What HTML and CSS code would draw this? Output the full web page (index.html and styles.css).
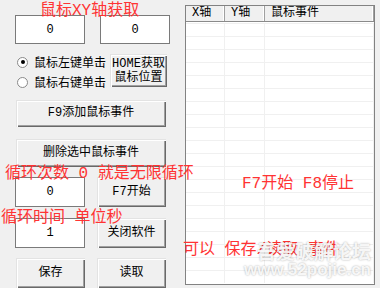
FILE: index.html
```html
<!DOCTYPE html>
<html lang="zh">

<head>
  <meta charset="UTF-8" />
  <title>鼠标连点器</title>
  <link rel="stylesheet" href="styles.css">
</head>

<body>
  <div class="window">
    <!-- Panneau de gauche : coordonnées et commandes -->
    <section class="left">
      <div class="pos-row">
        <div class="field">0</div>
        <div class="field">0</div>
      </div>

      <div class="mode-row">
        <div class="radios">
          <label class="radio"><span class="dot on"></span>鼠标左键单击</label>
          <label class="radio"><span class="dot"></span>鼠标右键单击</label>
        </div>
        <button class="btn home">HOME获取<br>鼠标位置</button>
      </div>

      <button class="btn wide add">F9添加鼠标事件</button>
      <button class="btn wide del">删除选中鼠标事件</button>

      <div class="pair first">
        <div class="field">0</div>
        <button class="btn">F7开始</button>
      </div>
      <div class="pair">
        <div class="field">1</div>
        <button class="btn">关闭软件</button>
      </div>
      <div class="pair last">
        <button class="btn">保存</button>
        <button class="btn">读取</button>
      </div>
    </section>

    <!-- Liste des événements -->
    <section class="list">
      <div class="list-head">
        <div class="col">X轴</div>
        <div class="col">Y轴</div>
        <div class="col">鼠标事件</div>
      </div>
      <div class="list-body" id="listBody"></div>
    </section>

    <!-- Annotations rouges -->
    <span class="note n1">鼠标XY轴获取</span>
    <span class="note n2">循环次数 0 就是无限循环</span>
    <span class="note n3">循环时间 单位秒</span>
    <span class="note n4">F7开始 F8停止</span>
    <span class="note n5">可以 保存/读取 事件</span>

    <div class="watermark">
      <div class="wm-title">吾爱破解论坛</div>
      <div class="wm-url">www.52pojie.cn</div>
    </div>
  </div>

  <script>
    // lignes vides de la liste
    const listBody = document.getElementById('listBody');
    for (let i = 0; i < 20; i++) {
      listBody.insertAdjacentHTML('beforeend',
        '<div class="list-row"><div class="cell"></div><div class="cell"></div><div class="cell"></div></div>');
    }
  </script>
</body>

</html>
```

FILE: styles.css
```css
/* --- Base --- */
body {
  margin: 0;
  background: #f0f0f0;
  font: 12px "Liberation Mono", "Noto Sans CJK SC", monospace;
  color: #000;
}

.window {
  position: relative;
  width: 380px;
  height: 288px;
  display: flex;
  overflow: hidden;
}

/* --- Panneau gauche --- */
.left {
  width: 185px;
  flex: none;
  box-sizing: border-box;
  padding: 15px 0 0 15px;
  display: flex;
  flex-direction: column;
  align-items: flex-start;
}

.field {
  width: 70px;
  height: 29px;
  box-sizing: border-box;
  background: #fff;
  border: 1px solid #7a7a7a;
  display: flex;
  align-items: center;
  justify-content: center;
  line-height: 1;
}

.pos-row {
  display: flex;
  gap: 15px;
}

.mode-row {
  display: flex;
  margin-top: 10px;
}

.radios {
  width: 95px;
  margin-top: -2px;
  display: flex;
  flex-direction: column;
}

.radio {
  height: 20px;
  display: flex;
  align-items: center;
  gap: 6px;
  padding-left: 2px;
}

.dot {
  width: 11px;
  height: 11px;
  box-sizing: border-box;
  border: 1px solid #8a8a8a;
  border-radius: 50%;
  background: #fff;
  display: flex;
  align-items: center;
  justify-content: center;
}

.dot.on::after {
  content: "";
  width: 4px;
  height: 4px;
  border-radius: 50%;
  background: #000;
}

/* --- Boutons --- */
.btn {
  background: #f0f0f0;
  border: none;
  padding: 0;
  font: inherit;
  color: #000;
  box-shadow: inset 1px 1px #e3e3e3, inset 2px 2px #fff,
    inset -1px -1px #696969, inset -2px -2px #a0a0a0;
  line-height: 1.2;
}

.home {
  width: 57px;
  height: 33px;
  line-height: 14px;
}

.wide {
  width: 150px;
  margin-left: 1px;
}

.add {
  height: 28px;
  margin-top: 8px;
}

.del {
  height: 29px;
  margin-top: 12px;
}

.pair {
  display: flex;
  gap: 12px;
  margin-top: 11px;
}

.pair.first {
  margin-top: 10px;
}

.pair.last {
  margin-top: 10px;
  margin-left: 1px;
  gap: 12px;
}

.pair .field {
  height: 30px;
}

.pair .btn {
  width: 69px;
  height: 30px;
}

/* --- Liste --- */
.list {
  width: 190px;
  height: 280px;
  margin-top: 5px;
  box-sizing: border-box;
  border: 1px solid #828282;
  background: #fff;
  overflow: hidden;
}

.list-head {
  display: grid;
  grid-template-columns: 39px 40px 1fr;
  height: 16px;
  box-sizing: border-box;
  border-bottom: 1px solid #8a8a8a;
  background: #f0f0f0;
}

.list-head .col {
  padding-left: 6px;
  line-height: 15px;
  border-right: 1px solid #a0a0a0;
  box-shadow: inset -1px 0 #fff;
}

.list-body {
  margin-top: 1px;
}

.list-row {
  display: grid;
  grid-template-columns: 39px 40px 1fr;
  height: 13px;
  box-sizing: border-box;
  border-top: 1px solid #f0f0f0;
}

.cell {
  border-right: 1px solid #f0f0f0;
}

/* --- Annotations --- */
.note {
  position: absolute;
  color: #f33;
  font-size: 16px;
  line-height: 16px;
  white-space: pre;
}

.n1 { left: 40px; top: 3px; }
.n2 { left: 5px; top: 166px; }
.n3 { left: 1px; top: 210px; }
.n4 { left: 242px; top: 176px; }
.n5 { left: 183px; top: 242px; }

/* --- Filigrane --- */
.watermark {
  position: absolute;
  right: 9px;
  top: 240px;
  color: rgba(255, 255, 255, 0.9);
  font-family: "Noto Sans CJK SC", sans-serif;
  font-weight: bold;
  text-align: right;
  text-shadow: 0 0 2px rgba(0, 0, 0, 0.35);
}

.wm-title {
  font-size: 19px;
  line-height: 21px;
}

.wm-url {
  font-family: "Liberation Sans", sans-serif;
  font-size: 17px;
  line-height: 17px;
}
```
